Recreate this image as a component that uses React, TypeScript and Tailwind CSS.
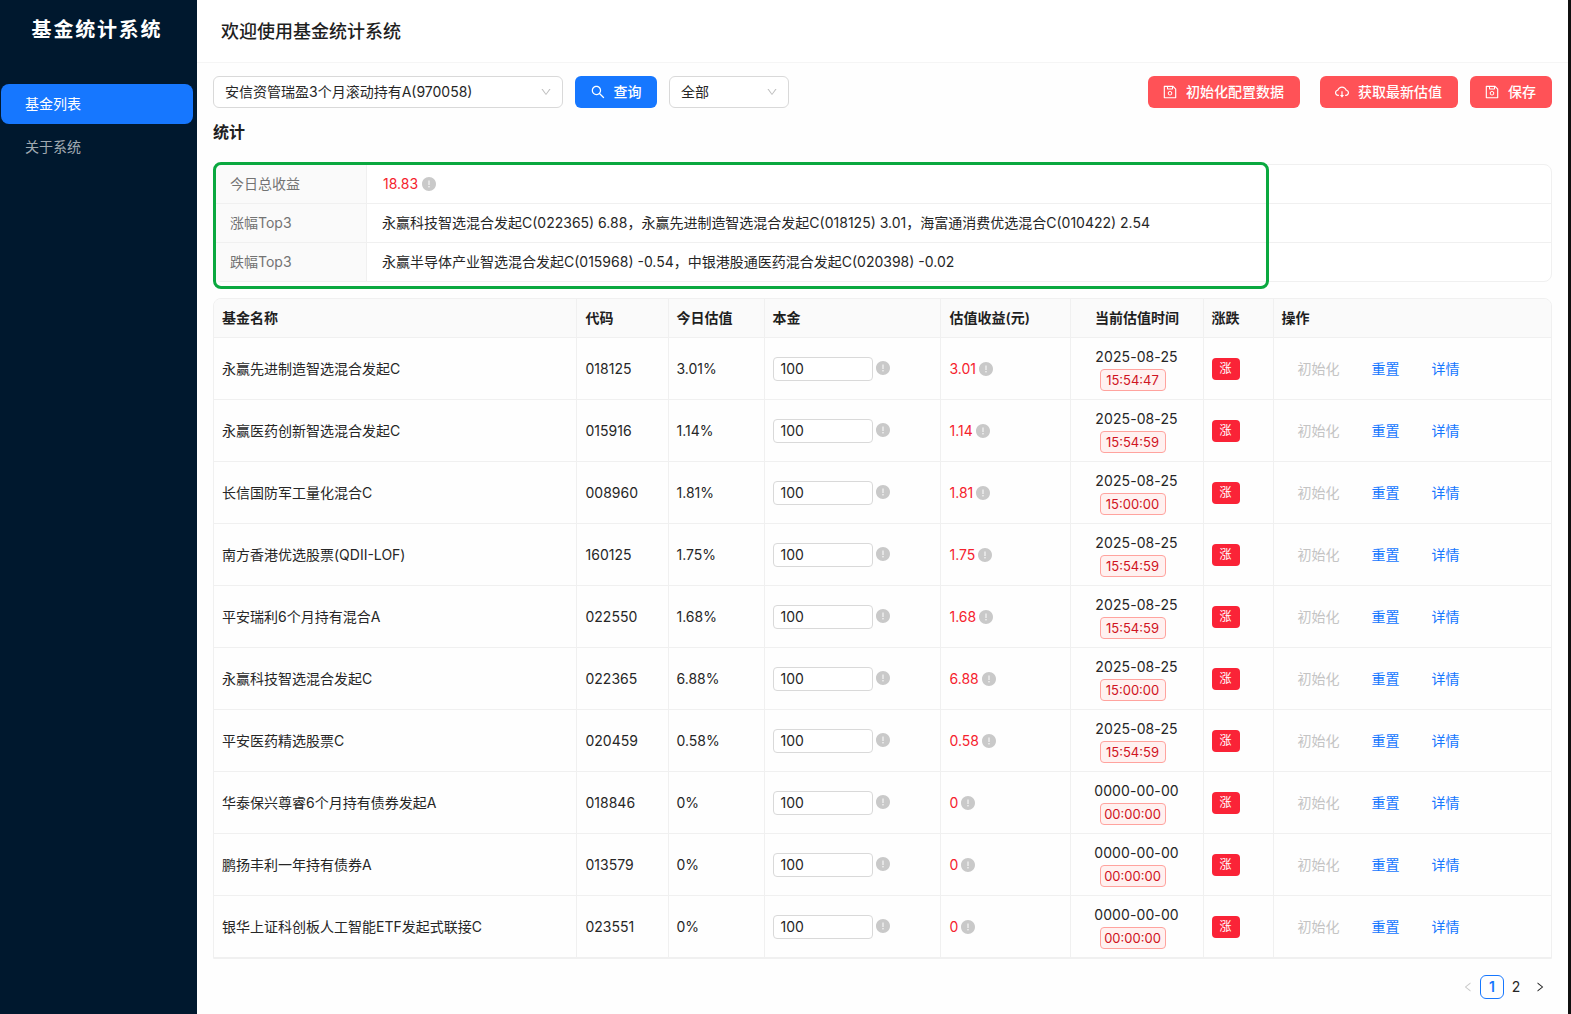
import React from "react";
import {
  AiOutlineSearch,
  AiOutlineDown,
  AiFillExclamationCircle,
  AiOutlineLeft,
  AiOutlineRight,
  AiOutlineCloudDownload,
  AiOutlineSave,
} from "react-icons/ai";

const rows = [
  ["永赢先进制造智选混合发起C", "018125", "3.01%", "3.01", "2025-08-25", "15:54:47"],
  ["永赢医药创新智选混合发起C", "015916", "1.14%", "1.14", "2025-08-25", "15:54:59"],
  ["长信国防军工量化混合C", "008960", "1.81%", "1.81", "2025-08-25", "15:00:00"],
  ["南方香港优选股票(QDII-LOF)", "160125", "1.75%", "1.75", "2025-08-25", "15:54:59"],
  ["平安瑞利6个月持有混合A", "022550", "1.68%", "1.68", "2025-08-25", "15:54:59"],
  ["永赢科技智选混合发起C", "022365", "6.88%", "6.88", "2025-08-25", "15:00:00"],
  ["平安医药精选股票C", "020459", "0.58%", "0.58", "2025-08-25", "15:54:59"],
  ["华泰保兴尊睿6个月持有债券发起A", "018846", "0%", "0", "0000-00-00", "00:00:00"],
  ["鹏扬丰利一年持有债券A", "013579", "0%", "0", "0000-00-00", "00:00:00"],
  ["银华上证科创板人工智能ETF发起式联接C", "023551", "0%", "0", "0000-00-00", "00:00:00"],
];

function Info({ className = "" }: { className?: string }) {
  return <AiFillExclamationCircle className={"shrink-0 text-[#c9c9c9] " + className} size={16} />;
}

function DangerBtn({ icon, label, w }: { icon: React.ReactNode; label: string; w: string }) {
  return (
    <button className={"flex h-8 items-center justify-center gap-2 rounded-md bg-[#ff5257] pr-[2px] text-sm font-medium text-white " + w}>
      {icon}
      <span>{label}</span>
    </button>
  );
}

function StatRow({ label, children, last }: { label: string; children: React.ReactNode; last?: boolean }) {
  return (
    <div className={"flex items-center " + (last ? "h-[38px]" : "h-[39px] border-b border-[#f0f0f0]")}>
      <div className="flex h-full w-[153px] shrink-0 items-center border-r border-[#f0f0f0] bg-[#fafafa] pl-[16px] text-[#737373]">
        {label}
      </div>
      <div className="flex items-center pl-[15px] text-[#262626]">{children}</div>
    </div>
  );
}

export default function App() {
  return (
    <div
      className="flex h-[1014px] w-full overflow-hidden bg-[#101010] text-sm text-[#262626]"
      style={{ fontFamily: 'Inter, "Noto Sans CJK SC", sans-serif' }}
    >
      <aside className="flex w-[197px] shrink-0 flex-col bg-[#00182e]">
        <div className="flex h-[60px] items-center justify-center pr-[3px] text-xl font-bold tracking-[1.8px] text-white">
          基金统计系统
        </div>
        <nav className="mt-[24px] flex flex-col gap-[3px] pl-[1px] pr-[4px]">
          <div className="flex h-10 items-center rounded-lg bg-[#1677ff] pl-6 text-white">基金列表</div>
          <div className="flex h-10 items-center rounded-lg pl-6 text-[#ffffffa6]">关于系统</div>
        </nav>
      </aside>

      <div className="flex w-[1371px] shrink-0 flex-col bg-white">
        <header className="flex h-[63px] shrink-0 items-center border-b border-[#f5f5f5] pl-6 pt-[2px] text-lg font-medium text-[#1f1f1f]">
          欢迎使用基金统计系统
        </header>

        <main className="flex min-h-0 flex-1 flex-col bg-[#fefefe] px-4 pt-[13px]">
          <div className="flex items-center">
            <div className="flex h-8 w-[350px] items-center justify-between rounded-md border border-[#d9d9d9] bg-white pl-[11px] pr-[10px]">
              <span>安信资管瑞盈3个月滚动持有A(970058)</span>
              <AiOutlineDown className="text-[#bfbfbf]" size={12} />
            </div>
            <button className="ml-3 flex h-8 w-[82px] items-center justify-center gap-2 rounded-md bg-[#1677ff] pr-[1px] font-medium text-white">
              <AiOutlineSearch size={16} />
              <span>查询</span>
            </button>
            <div className="ml-3 flex h-8 w-[120px] items-center justify-between rounded-md border border-[#d9d9d9] bg-white pl-[11px] pr-[10px]">
              <span>全部</span>
              <AiOutlineDown className="text-[#bfbfbf]" size={12} />
            </div>
            <div className="ml-auto flex items-center">
              <DangerBtn w="w-[152px]" icon={<AiOutlineSave size={16} />} label="初始化配置数据" />
              <DangerBtn w="ml-5 w-[138px]" icon={<AiOutlineCloudDownload size={16} />} label="获取最新估值" />
              <DangerBtn w="ml-3 w-[82px]" icon={<AiOutlineSave size={16} />} label="保存" />
            </div>
          </div>

          <h2 className="mt-[12px] h-[24px] text-base font-semibold leading-6 text-[#1f1f1f]">统计</h2>

          <div className="relative mt-[20px] rounded-lg border border-[#f0f0f0] bg-white">
            <StatRow label="今日总收益">
              <span className="pl-[1px] text-[#f5222d]">18.83</span>
              <Info className="ml-[3px]" />
            </StatRow>
            <StatRow label="涨幅Top3">
              永赢科技智选混合发起C(022365) 6.88，永赢先进制造智选混合发起C(018125) 3.01，海富通消费优选混合C(010422) 2.54
            </StatRow>
            <StatRow label="跌幅Top3" last>
              永赢半导体产业智选混合发起C(015968) -0.54，中银港股通医药混合发起C(020398) -0.02
            </StatRow>
            <div className="pointer-events-none absolute -left-[1px] -top-[3px] h-[127px] w-[1056px] rounded-lg border-[3px] border-[#0aa83f]" />
          </div>

          <div className="mt-[16px] overflow-hidden rounded-t-lg border border-[#f0f0f0]">
            <table className="w-full table-fixed border-collapse">
              <colgroup>
                <col className="w-[362px]" />
                <col className="w-[92px]" />
                <col className="w-[96px]" />
                <col className="w-[176px]" />
                <col className="w-[130px]" />
                <col className="w-[133px]" />
                <col className="w-[70px]" />
                <col />
              </colgroup>
              <thead>
                <tr className="h-[38px] border-b border-[#f0f0f0] bg-[#fafafa] text-left font-semibold text-[#1f1f1f]">
                  <th className="border-r border-[#f0f0f0] pl-2 pt-[1px] font-semibold">基金名称</th>
                  <th className="border-r border-[#f0f0f0] pl-[9px] pt-[1px] font-semibold">代码</th>
                  <th className="border-r border-[#f0f0f0] pl-2 pt-[1px] font-semibold">今日估值</th>
                  <th className="border-r border-[#f0f0f0] pl-2 pt-[1px] font-semibold">本金</th>
                  <th className="border-r border-[#f0f0f0] pl-[9px] pt-[1px] font-semibold">估值收益(元)</th>
                  <th className="border-r border-[#f0f0f0] pl-[1px] pt-[1px] text-center font-semibold">当前估值时间</th>
                  <th className="border-r border-[#f0f0f0] pl-2 pt-[1px] font-semibold">涨跌</th>
                  <th className="pl-2 pt-[1px] font-semibold">操作</th>
                </tr>
              </thead>
              <tbody>
                {rows.map((r) => (
                  <tr key={r[1]} className="h-[62px] border-b border-[#f0f0f0] text-[#262626]">
                    <td className="border-r border-[#f0f0f0] pl-2 pt-[2px]">{r[0]}</td>
                    <td className="border-r border-[#f0f0f0] pl-[9px] pt-[2px]">{r[1]}</td>
                    <td className="border-r border-[#f0f0f0] pl-2 pt-[2px]">{r[2]}</td>
                    <td className="border-r border-[#f0f0f0] pl-2 pt-[2px]">
                      <div className="flex items-center">
                        <div className="flex h-6 w-[100px] items-center rounded border border-[#d9d9d9] bg-white pl-[7px]">100</div>
                        <Info className="-mt-[2px] ml-[2px]" />
                      </div>
                    </td>
                    <td className="border-r border-[#f0f0f0] pl-[9px] pt-[2px]">
                      <div className="flex items-center">
                        <span className="text-[#f5222d]">{r[3]}</span>
                        <Info className="ml-[2px]" />
                      </div>
                    </td>
                    <td className="border-r border-[#f0f0f0] pt-[2px] text-center">
                      <div className="leading-[20px] tracking-[0.1px]">{r[4]}</div>
                      <div className="mr-2 mt-[2px] inline-flex h-[22px] w-[66px] items-center justify-center rounded border border-[#ffa39e] bg-[#fff1f0] text-[13px] text-[#cf1322]">
                        {r[5]}
                      </div>
                    </td>
                    <td className="border-r border-[#f0f0f0] pl-2 pt-[2px]">
                      <div className="flex h-[22px] w-7 items-center justify-center rounded bg-[#fa2337] text-xs text-white">涨</div>
                    </td>
                    <td className="pl-6 pt-[2px]">
                      <div className="flex items-center">
                        <span className="text-[#c4c4c4]">初始化</span>
                        <span className="ml-[32px] text-[#1677ff]">重置</span>
                        <span className="ml-[32px] text-[#1677ff]">详情</span>
                      </div>
                    </td>
                  </tr>
                ))}
              </tbody>
            </table>
          </div>

          <div className="mt-[16px] flex items-center justify-end">
            <AiOutlineLeft className="mr-[6px] text-[#c9c9c9]" size={12} />
            <div className="flex h-6 w-6 items-center justify-center rounded-md border border-[#1677ff] font-semibold text-[#1677ff]">1</div>
            <div className="flex h-6 w-6 items-center justify-center">2</div>
            <AiOutlineRight className="mx-[6px] text-[#262626]" size={12} />
          </div>
        </main>
      </div>
      <div className="flex-1 bg-[#101010]" />
    </div>
  );
}
